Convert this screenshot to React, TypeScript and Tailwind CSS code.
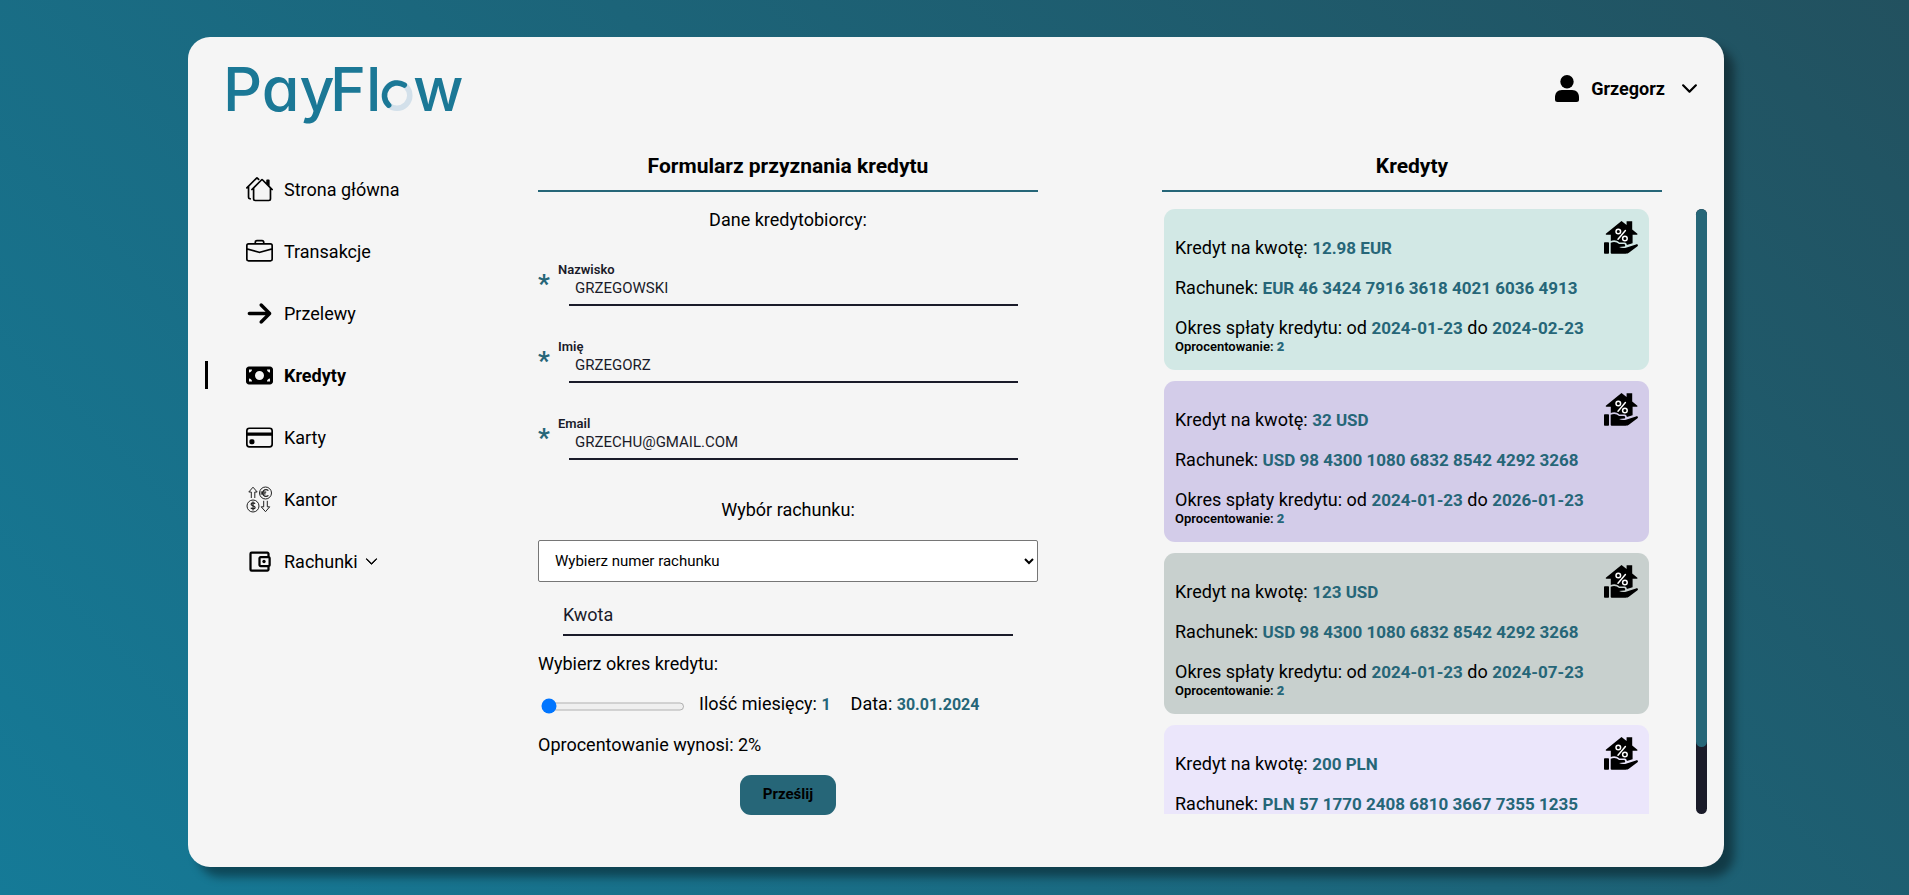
import { useState, type ReactNode } from "react";
import { BsBriefcase, BsChevronDown, BsCreditCard, BsHouses } from "react-icons/bs";
import { FaArrowRight, FaMoneyBill } from "react-icons/fa6";
import { MdOutlineAccountBalanceWallet } from "react-icons/md";

function Logo() {
  return (
    <svg
      role="img"
      aria-label="PayFlow"
      viewBox="0 0 248 84"
      className="-ml-2 h-[84px] w-[248px] overflow-visible font-['Inter',sans-serif] text-[61px] font-medium [font-feature-settings:'cv11']"
      fill="#1b7896"
    >
      <text x="3" y="64">Pay</text>
      <text x="110" y="64">Fl</text>
      <circle cx="177" cy="48.500" r="12.800" fill="none" stroke="#d3e0ea" strokeWidth="5.500" />
      <path d="M168.700 58.200A12.800 12.800 0 0 1 184.300 38" fill="none" stroke="#1b7896" strokeWidth="5.500" strokeLinecap="round" />
      <text x="193" y="64">w</text>
    </svg>
  );
}

function UserIcon() {
  return (
    <svg viewBox="0 0 24 27" className="h-[27px] w-6" aria-hidden="true">
      <circle cx="12" cy="6.700" r="6.700" />
      <path d="M7 15h10c4.600 0 7 3.200 7 7.200V24.500q0 2.500-2.500 2.500h-19Q0 27 0 24.500v-2.300C0 18.200 2.400 15 7 15Z" />
    </svg>
  );
}

function ExchangeIcon() {
  return (
    <svg viewBox="0 0 27 27" className="size-[27px]" fill="none" stroke="#222" strokeWidth="1">
      <path d="M5.300 12V6H2.800L7 1.200 11.200 6H8.800v6" />
      <circle cx="19.500" cy="7" r="6" />
      <path d="M22.400 4.600A3.400 3.400 0 1 0 22.400 9.400M14.600 6.200h5.600M14.600 7.900h5" strokeWidth="1.200" />
      <circle cx="7" cy="20" r="6" />
      <path d="M9 17.900c-.4-1.200-3.900-1.400-3.900.3 0 1.900 4 1.300 4 3.300 0 1.900-3.700 1.700-4.200.2M7 15.500v9" strokeWidth="1.200" />
      <path d="M17.700 14.800v6h-2.500l4.300 4.900 4.200-4.900h-2.400v-6" />
    </svg>
  );
}

function LoanIcon() {
  return (
    <svg viewBox="0 0 34 34" className="size-[34px] shrink-0" aria-hidden="true">
      <path d="M17.500 0 1.800 12.800q-.4 1 .7 1h4.300V20c3-1.200 6-.8 8.600 1.400h5.200c1.600.2 2.400 1.400 2.200 2.700l5.800-1.800v-8.500h4.200q1.100 0 .6-1L28.200 8.500V.3h-5.600v3.800Z" />
      <g fill="none" stroke="#fff" strokeWidth="1.500">
        <circle cx="14.300" cy="10.500" r="2.300" />
        <circle cx="20.900" cy="17.500" r="2.300" />
        <path d="m21.400 9.600-7.400 8.600" strokeLinecap="round" />
      </g>
      <rect x="0" y="21.300" width="5" height="11.500" rx=".8" />
      <path d="M6.700 21.800c3-1.600 6-1 8.400 1.300h4.700c1.500 0 2 2.100.3 2.500l-5 .5c2.400 1.200 5.600 1 7.600.3l9.300-3c1.500-.4 2.600.7 1.500 1.800l-8.300 6.400c-1 .8-2 1.200-3.600 1.200H7.800q-1.100 0-1.100-1.100Z" />
    </svg>
  );
}

type NavEntry = { label: string; icon: ReactNode; active?: boolean; expandable?: boolean };

const navEntries: NavEntry[] = [
  { label: "Strona główna", icon: <BsHouses size={27} /> },
  { label: "Transakcje", icon: <BsBriefcase size={27} /> },
  { label: "Przelewy", icon: <FaArrowRight size={27} /> },
  { label: "Kredyty", icon: <FaMoneyBill size={27} />, active: true },
  { label: "Karty", icon: <BsCreditCard size={27} /> },
  { label: "Kantor", icon: <ExchangeIcon /> },
  { label: "Rachunki", icon: <MdOutlineAccountBalanceWallet size={27} />, expandable: true },
];

function Sidebar() {
  return (
    <nav className="w-[350px] shrink-0 pt-[18px] pl-[17px]">
      <ul>
        {navEntries.map((entry) => (
          <li key={entry.label} className="flex h-[62px] items-center">
            <span className={entry.active ? "h-7 w-[3px] bg-black" : "h-7 w-[3px]"} />
            <a
              href="#"
              className={
                entry.active
                  ? "ml-[38px] flex items-center gap-[11px] font-bold"
                  : "ml-[38px] flex items-center gap-[11px]"
              }
            >
              <span className="flex w-[27px] justify-center">{entry.icon}</span>
              <span className="flex items-center gap-[7px]">
                {entry.label}
                {entry.expandable && <BsChevronDown size={13} strokeWidth={1} />}
              </span>
            </a>
          </li>
        ))}
      </ul>
    </nav>
  );
}

const heading =
  "border-b-2 border-[#266678] pt-0.5 text-center text-[21px] leading-[48px] font-bold";

function TextField({ id, label, initial }: { id: string; label: string; initial: string }) {
  return (
    <div className="flex items-center">
      <span className="w-5 text-[26px] leading-6 font-bold text-[#266678]">*</span>
      <div className="mr-5 flex-1">
        <label htmlFor={id} className="block text-[13px] leading-4 font-semibold text-[#1a1b29]">
          {label}
        </label>
        <div className="ml-[11px]">
          <input
            id={id}
            defaultValue={initial}
            className="block h-7 w-full border-b-2 border-[#1a1b29] pb-1.5 pl-1.5 text-[15px] leading-5 text-[#1a1b29] outline-none"
          />
        </div>
      </div>
    </div>
  );
}

function CreditForm() {
  const [months, setMonths] = useState(1);
  return (
    <form className="flex min-w-0 flex-[500] flex-col" onSubmit={(e) => e.preventDefault()}>
      <h2 className={heading}>Formularz przyznania kredytu</h2>
      <p className="mt-4 text-center leading-6">Dane kredytobiorcy:</p>
      <div className="mt-[30px] flex flex-col gap-[33px]">
        <TextField id="surname" label="Nazwisko" initial="GRZEGOWSKI" />
        <TextField id="name" label="Imię" initial="GRZEGORZ" />
        <TextField id="email" label="Email" initial="GRZECHU@GMAIL.COM" />
      </div>
      <label htmlFor="account" className="mt-[38px] text-center leading-6">
        Wybór rachunku:
      </label>
      <select
        id="account"
        className="mt-[18px] h-[42px] w-full rounded-[2px] border border-[#767676] bg-white px-3 text-[15px]"
      >
        <option>Wybierz numer rachunku</option>
      </select>
      <input
        aria-label="Kwota"
        placeholder="Kwota"
        className="mx-[25px] mt-5 h-[34px] border-b-2 border-[#1a1b29] pb-2 leading-6 outline-none placeholder:text-[#1a1b29]"
      />
      <label htmlFor="period" className="mt-4 leading-6">
        Wybierz okres kredytu:
      </label>
      <div className="mt-4 flex h-6 items-center leading-6 [&_b]:text-[16px] [&_b]:text-[#266678]">
        <input
          id="period"
          type="range"
          min={1}
          max={60}
          value={months}
          onChange={(e) => setMonths(Number(e.target.value))}
          className="mt-1 mr-[14px] ml-[3px] h-[17px] w-36"
        />
        <span>
          Ilość miesięcy: <b>{months}</b>
        </span>
        <span className="ml-5">
          Data: <b>30.01.2024</b>
        </span>
      </div>
      <p className="mt-[17px] leading-6">Oprocentowanie wynosi: 2%</p>
      <button
        type="submit"
        className="mt-[18px] h-10 w-24 self-center rounded-[11px] bg-[#266678] pb-0.5 text-[15px] font-bold"
      >
        Prześlij
      </button>
    </form>
  );
}

const credits = [
  { amount: "12.98 EUR", account: "EUR 46 3424 7916 3618 4021 6036 4913", from: "2024-01-23", to: "2024-02-23", rate: 2, color: "bg-[#d2e8e5]" },
  { amount: "32 USD", account: "USD 98 4300 1080 6832 8542 4292 3268", from: "2024-01-23", to: "2026-01-23", rate: 2, color: "bg-[#d3cce9]" },
  { amount: "123 USD", account: "USD 98 4300 1080 6832 8542 4292 3268", from: "2024-01-23", to: "2024-07-23", rate: 2, color: "bg-[#c8d0ce]" },
  { amount: "200 PLN", account: "PLN 57 1770 2408 6810 3667 7355 1235", from: "2024-01-23", to: "2024-07-23", rate: 2, color: "bg-[#ebe6fb]" },
];

function CreditCardItem({ credit }: { credit: (typeof credits)[number] }) {
  return (
    <li className={`flex shrink-0 items-start justify-between rounded-[11px] px-[11px] pt-3 pb-4 ${credit.color}`}>
      <div className="flex flex-col gap-4 pt-[15px] leading-6 [&_b]:text-[#266678]">
        <p>
          Kredyt na kwotę: <b className="text-[17px]">{credit.amount}</b>
        </p>
        <p>
          Rachunek: <b className="text-[17px]">{credit.account}</b>
        </p>
        <div>
          <p>
            Okres spłaty kredytu: od <b className="text-[17px]">{credit.from}</b> do{" "}
            <b className="text-[17px]">{credit.to}</b>
          </p>
          <p className="text-[13px] leading-[14px] font-semibold">
            Oprocentowanie: <b>{credit.rate}</b>
          </p>
        </div>
      </div>
      <LoanIcon />
    </li>
  );
}

function CreditList() {
  return (
    <section className="min-w-0 flex-[545]">
      <h2 className={`${heading} mr-[45px]`}>Kredyty</h2>
      <div className="mt-[17px] flex max-h-[605px]">
        <ul className="mr-[47px] ml-0.5 flex min-w-0 flex-1 flex-col gap-[11px] overflow-y-auto [scrollbar-width:none]">
          {credits.map((credit) => (
            <CreditCardItem key={credit.amount} credit={credit} />
          ))}
        </ul>
        <div className="w-[11px] rounded-full bg-[#1a1b29]">
          <div className="h-[89%] rounded-full bg-[#266678]" />
        </div>
      </div>
    </section>
  );
}

export default function App() {
  return (
    <div className="flex min-h-screen flex-col bg-linear-[45deg,#157a97,#22515f] pt-[37px] pr-[185px] pb-7 pl-[188px] font-['Roboto',sans-serif] text-[18px] text-black">
      <div className="flex-1 rounded-[22px] bg-[#f5f5f5] pr-[17px] pb-12 shadow-[10px_10px_10px_rgba(0,0,0,0.4)]">
        <header className="flex h-[103px] items-center justify-between pr-[9px] pl-10">
          <Logo />
          <button type="button" className="flex items-center font-bold">
            <UserIcon />
            <span className="ml-3">Grzegorz</span>
            <BsChevronDown size={17} strokeWidth={1} className="ml-4" />
          </button>
        </header>
        <main className="flex">
          <Sidebar />
          <CreditForm />
          <div className="w-31 shrink-0" />
          <CreditList />
        </main>
      </div>
    </div>
  );
}
